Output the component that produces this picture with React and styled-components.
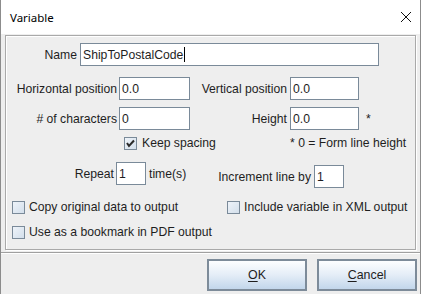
import React from "react";
import styled, { createGlobalStyle } from "styled-components";

const GlobalStyle = createGlobalStyle`
  html, body {
    margin: 0;
    padding: 0;
    background: #ffffff;
  }
  body {
    font-family: "Liberation Sans", Arial, sans-serif;
  }
`;

const Janela = styled.div`
  width: 421px;
  height: 294px;
  box-sizing: border-box;
  border-left: 1px solid #8c8c8c;
  border-right: 1px solid #8c8c8c;
  display: flex;
  flex-direction: column;
`;

const BarraTitulo = styled.div`
  height: 34px;
  flex-shrink: 0;
  background: #ffffff;
  display: flex;
  align-items: center;
  justify-content: space-between;
  padding: 0 8px 0 9px;
  font-family: "Noto Sans", "Open Sans", sans-serif;
  font-size: 11.5px;
  color: #000;
`;

const Fechar = styled.svg`
  width: 12px;
  height: 12px;
`;

const Corpo = styled.div`
  flex: 1;
  background: #eeeeee;
  display: flex;
  flex-direction: column;
`;

const Painel = styled.div`
  margin: 1px 4px 0 4px;
  border: 1px solid #a9a9a9;
  box-shadow: inset 1px 1px 0 #ffffff, 1px 1px 0 #ffffff;
  padding: 7px 0 10px 0;
  display: flex;
  flex-direction: column;
  font-size: 12.2px;
  color: #1e1e1e;
`;

const Linha = styled.div`
  display: flex;
  align-items: ${(p) => p.$align || "center"};
  margin-top: ${(p) => p.$mt || 0}px;
`;

const Grupo = styled.div`
  display: flex;
  align-items: center;
  width: ${(p) => (p.$w ? p.$w + "px" : "auto")};
  padding-left: ${(p) => p.$pl || 0}px;
  padding-top: ${(p) => p.$pt || 0}px;
  box-sizing: border-box;
  flex-shrink: 0;
`;

const Rotulo = styled.span`
  width: ${(p) => p.$w}px;
  text-align: right;
  white-space: nowrap;
  flex-shrink: 0;
`;

const Texto = styled.span`
  margin-left: ${(p) => p.$ml || 0}px;
  white-space: nowrap;
`;

const Campo = styled.div`
  width: ${(p) => p.$w}px;
  height: 23px;
  margin-left: ${(p) => p.$ml || 0}px;
  box-sizing: border-box;
  border: 1px solid #7a8a99;
  background: #ffffff;
  display: flex;
  align-items: center;
  padding-left: 2px;
  flex-shrink: 0;
  color: #1e1e1e;
`;

const Cursor = styled.span`
  display: inline-block;
  width: 1px;
  height: 15px;
  background: #000;
  margin-left: 1px;
`;

const Caixa = styled.span`
  width: 13px;
  height: 13px;
  box-sizing: border-box;
  border: 1px solid #7a8a99;
  background: linear-gradient(135deg, #eef3f9 0%, #d3dfeb 100%);
  display: inline-flex;
  align-items: center;
  justify-content: center;
  flex-shrink: 0;
`;

const Separador = styled.div`
  margin-top: 2px;
  border-top: 1px solid #a0a0a0;
  border-bottom: 1px solid #ffffff;
`;

const BarraBotoes = styled.div`
  display: flex;
  justify-content: flex-end;
  gap: 10px;
  padding: 5px 3px 0 0;
`;

const Botao = styled.button`
  width: 100px;
  height: 32px;
  box-sizing: border-box;
  border: 2px solid #7d8b99;
  border-radius: 0;
  background: linear-gradient(to bottom, #fdfeff 0%, #e4edf7 50%, #c2d6eb 100%);
  font-family: "Liberation Sans", Arial, sans-serif;
  font-size: 12.4px;
  color: #1e1e1e;
  padding: 0;

  u {
    text-decoration-thickness: 1px;
    text-underline-offset: 2px;
  }
`;

function Marca() {
  return (
    <svg width="9" height="9" viewBox="0 0 9 9">
      <path d="M1 4 L3 7 L8 1.5" stroke="#2a2a2a" strokeWidth="2" fill="none" />
    </svg>
  );
}

function Opcao({ marcado, children, ml = 5 }) {
  return (
    <>
      <Caixa>{marcado && <Marca />}</Caixa>
      <Texto $ml={ml}>{children}</Texto>
    </>
  );
}

export default function App() {
  return (
    <>
      <GlobalStyle />
      <Janela>
        <BarraTitulo>
          <span>Variable</span>
          <Fechar viewBox="0 0 12 12">
            <path d="M1 1 L11 11 M11 1 L1 11" stroke="#111" strokeWidth="1" />
          </Fechar>
        </BarraTitulo>
        <Corpo>
          <Painel>
            <Linha>
              <Rotulo $w={71}>Name</Rotulo>
              <Campo $w={299} $ml={3}>
                ShipToPostalCode
                <Cursor />
              </Campo>
            </Linha>

            <Linha $mt={11}>
              <Rotulo $w={111}>Horizontal position</Rotulo>
              <Campo $w={71} $ml={2}>0.0</Campo>
              <Rotulo $w={97}>Vertical position</Rotulo>
              <Campo $w={69} $ml={3}>0.0</Campo>
            </Linha>

            <Linha $mt={7}>
              <Rotulo $w={111}># of characters</Rotulo>
              <Campo $w={71} $ml={2}>0</Campo>
              <Rotulo $w={97}>Height</Rotulo>
              <Campo $w={69} $ml={3}>0.0</Campo>
              <Texto $ml={7}>*</Texto>
            </Linha>

            <Linha $mt={6}>
              <Grupo $w={284} $pl={118}>
                <Opcao marcado>Keep spacing</Opcao>
              </Grupo>
              <Texto>* 0 = Form line height</Texto>
            </Linha>

            <Linha $mt={12} $align="flex-start">
              <Grupo $w={205}>
                <Rotulo $w={108}>Repeat</Rotulo>
                <Campo $w={30} $ml={2}>1</Campo>
                <Texto $ml={3}>time(s)</Texto>
              </Grupo>
              <Grupo $pt={3}>
                <Rotulo $w={100}>Increment line by</Rotulo>
                <Campo $w={30} $ml={3}>1</Campo>
              </Grupo>
            </Linha>

            <Linha $mt={12}>
              <Grupo $w={221} $pl={6}>
                <Opcao ml={4}>Copy original data to output</Opcao>
              </Grupo>
              <Opcao ml={4}>Include variable in XML output</Opcao>
            </Linha>

            <Linha $mt={11}>
              <Grupo $pl={6}>
                <Opcao ml={4}>Use as a bookmark in PDF output</Opcao>
              </Grupo>
            </Linha>
          </Painel>
          <Separador />
          <BarraBotoes>
            <Botao>
              <u>O</u>K
            </Botao>
            <Botao>
              <u>C</u>ancel
            </Botao>
          </BarraBotoes>
        </Corpo>
      </Janela>
    </>
  );
}
